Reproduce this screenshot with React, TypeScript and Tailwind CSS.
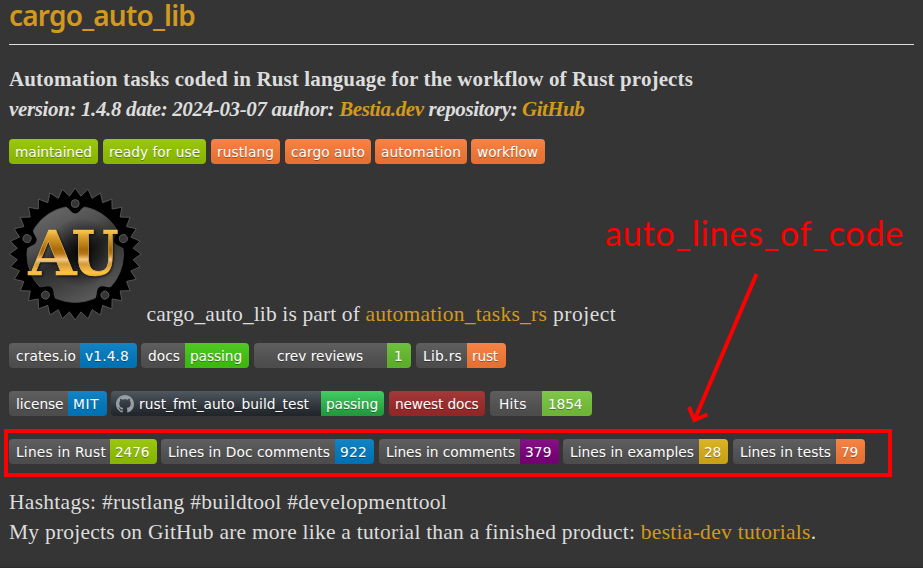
import type { ReactNode } from "react";

type Cell = { text: string; box: string; pad: string; track: string };

function Badge({ cells, icon, cls = "" }: { cells: Cell[]; icon?: ReactNode; cls?: string }) {
  return (
    <span className={`flex h-[25px] shrink-0 overflow-hidden rounded-[4px] ${cls}`}>
      {cells.map((c, i) => (
        <span key={c.text} className={`flex h-full shrink-0 ${c.box}`}>
          <span className={`flex h-full w-full items-center bg-linear-to-b from-[#bbbbbb]/10 to-black/10 ${c.pad}`}>
            {i === 0 && icon}
            <span className={`leading-[26px] ${c.track}`}>{c.text}</span>
          </span>
        </span>
      ))}
    </span>
  );
}

const cell = (text: string, box: string, pad: string, track = ""): Cell => ({ text, box, pad, track });

function Row({ children, cls }: { children: ReactNode; cls: string }) {
  return (
    <div
      className={`flex h-[25px] whitespace-nowrap font-['DejaVu_Sans',sans-serif] text-[13.75px] text-white [text-shadow:0_1px_0_rgba(1,1,1,0.35)] ${cls}`}
    >
      {children}
    </div>
  );
}

// Outline of the 32-tooth ring
const gear = Array.from({ length: 64 }, (_, i) => {
  const a = (i * Math.PI) / 32 - Math.PI / 2;
  const r = i % 2 === 0 ? 66 : 58.2;
  return `${(66.2 + r * Math.cos(a)).toFixed(2)},${(66 + r * Math.sin(a)).toFixed(2)}`;
}).join(" ");

const bolts = [0, 72, 144, 216, 288];

function Logo() {
  return (
    <svg width="132" height="132" viewBox="0 0 132 132" className="block shrink-0 self-start overflow-visible">
      <defs>
        <linearGradient id="disk" x1="0.25" y1="0" x2="0.75" y2="1">
          <stop offset="0" stopColor="#686868" />
          <stop offset="0.3" stopColor="#505050" />
          <stop offset="0.5" stopColor="#2c2c2c" />
          <stop offset="0.7" stopColor="#404040" />
          <stop offset="1" stopColor="#606060" />
        </linearGradient>
        <radialGradient id="core" cx="0.56" cy="0.48" r="0.36">
          <stop offset="0" stopColor="#000" stopOpacity="0.9" />
          <stop offset="1" stopColor="#000" stopOpacity="0" />
        </radialGradient>
        <linearGradient id="gold" gradientUnits="userSpaceOnUse" x1="0" y1="42" x2="0" y2="88">
          <stop offset="0" stopColor="#ffc94a" />
          <stop offset="0.15" stopColor="#d9a030" />
          <stop offset="0.42" stopColor="#a96a08" />
          <stop offset="0.52" stopColor="#b87818" />
          <stop offset="0.64" stopColor="#f3c880" />
          <stop offset="0.74" stopColor="#d39a3c" />
          <stop offset="0.92" stopColor="#ffc240" />
          <stop offset="1" stopColor="#f2b233" />
        </linearGradient>
      </defs>
      <polygon points={gear} fill="#000" stroke="#5a5a5a" strokeWidth="0.9" strokeLinejoin="round" />
      <circle cx="66.2" cy="66.2" r="48.3" fill="url(#disk)" stroke="#4a4a4a" strokeWidth="0.8" />
      <circle cx="66.2" cy="66.2" r="48" fill="url(#core)" />
      {bolts.map((deg) => (
        <g key={deg} transform={`rotate(${deg} 66.2 66.2)`}>
          <path
            d="M55.5 17.5 L58.5 19.8 Q60 20.8 61.5 22.8 Q63.5 25.4 66.2 25.4 Q68.9 25.4 70.9 22.8 Q72.4 20.8 73.9 19.8 L76.9 17.5 L75 13 L57 13 Z"
            fill="#000"
          />
          <circle cx="66.2" cy="15.6" r="4" fill="#363636" stroke="#5a5a5a" strokeWidth="0.9" />
        </g>
      ))}
      <g className="font-['DejaVu_Serif',serif] font-bold [filter:drop-shadow(1px_1.2px_0.8px_rgba(0,0,0,0.7))]" fontSize="62.5" strokeWidth="0.6">
        <g fill="url(#gold)" stroke="#f3bd4d">
          <text x="19.6" y="87.3" textLength="48" lengthAdjust="spacingAndGlyphs">A</text>
          <text x="62.6" y="87.3" textLength="47" lengthAdjust="spacingAndGlyphs">U</text>
        </g>
      </g>
    </svg>
  );
}

const octocat = (
  <svg viewBox="0 0 16 16" className="mr-[5px] h-[18px] w-[18px] shrink-0" fill="#959da5">
    <path d="M8 0C3.58 0 0 3.58 0 8c0 3.54 2.29 6.53 5.47 7.59.4.07.55-.17.55-.38 0-.19-.01-.82-.01-1.49-2.01.37-2.53-.49-2.69-.94-.09-.23-.48-.94-.82-1.13-.28-.15-.68-.52-.01-.53.63-.01 1.08.58 1.23.82.72 1.21 1.87.87 2.33.66.07-.52.28-.87.51-1.07-1.78-.2-3.64-.89-3.64-3.95 0-.87.31-1.59.82-2.15-.08-.2-.36-1.02.08-2.12 0 0 .67-.21 2.2.82.64-.18 1.32-.27 2-.27s1.36.09 2 .27c1.53-1.04 2.2-.82 2.2-.82.44 1.1.16 1.92.08 2.12.51.56.82 1.27.82 2.15 0 3.07-1.87 3.75-3.65 3.95.29.25.54.73.54 1.48 0 1.07-.01 1.93-.01 2.2 0 .21.15.46.55.38A8.01 8.01 0 0 0 16 8c0-4.42-3.58-8-8-8z" />
  </svg>
);

function Link({ children, cls = "" }: { children: ReactNode; cls?: string }) {
  return <a className={`text-[#d2991d] ${cls}`}>{children}</a>;
}

export default function App() {
  return (
    <div className="relative h-[568px] w-[923px] overflow-hidden border-b border-[#2c2c2c] bg-[#353535] pl-[9px] font-['Liberation_Serif',serif] text-[21px] leading-[30px] whitespace-pre text-[#dddddd]">
      <h1 className="h-[28px] font-['Noto_Sans',sans-serif] text-[28px] leading-[30px] font-semibold tracking-[-0.79px] text-[#d2991d]">
        cargo_auto_lib
      </h1>
      <hr className="mt-4 w-[905px] border-t border-[#dddddd]" />
      <p className="mt-[19px] font-bold tracking-[0.135px]">
        Automation tasks coded in Rust language for the workflow of Rust projects
      </p>
      <p className="font-bold italic">
        <span className="tracking-[-0.365px]">{"version: 1.4.8 date: 2024-03-07 author: "}</span>
        <Link cls="tracking-[-0.346px]">Bestia.dev</Link>
        <span className="tracking-[-0.423px]">{" repository: "}</span>
        <Link cls="tracking-[-0.55px]">GitHub</Link>
      </p>

      <Row cls="mt-[15px]">
        <Badge cells={[cell("maintained", "w-[89px] bg-[#97ca00]", "pl-1.5", "tracking-[-0.089px]")]} />
        <Badge cls="ml-[5px]" cells={[cell("ready for use", "w-[103px] bg-[#97ca00]", "pl-1.5")]} />
        <Badge cls="ml-[5px]" cells={[cell("rustlang", "w-[69px] bg-[#fe7d37]", "pl-1.5", "tracking-[0.049px]")]} />
        <Badge cls="ml-[5px]" cells={[cell("cargo auto", "w-[86px] bg-[#fe7d37]", "pl-1.5", "tracking-[0.015px]")]} />
        <Badge cls="ml-1" cells={[cell("automation", "w-[92px] bg-[#fe7d37]", "pl-1.5", "tracking-[0.09px]")]} />
        <Badge cls="ml-1" cells={[cell("workflow", "w-[74px] bg-[#fe7d37]", "pl-1.5", "tracking-[-0.074px]")]} />
      </Row>

      <div className="mt-6 flex h-[141px] items-end">
        <Logo />
        <p className="ml-[5.5px] text-[21.5px]">
          <span className="tracking-[0.126px]">{"cargo_auto_lib is part of "}</span>
          <Link cls="tracking-[0.255px]">automation_tasks_rs</Link>
          <span className="tracking-[0.5px]">{" project"}</span>
        </p>
      </div>

      <Row cls="mt-[14px]">
        <Badge cells={[cell("crates.io", "w-[71px] bg-[#555]", "pl-[7px]", "tracking-[0.083px]"), cell("v1.4.8", "w-[57px] bg-[#007ec6]", "pl-[5px]", "tracking-[0.146px]")]} />
        <Badge cls="ml-1" cells={[cell("docs", "w-[44px] bg-[#555]", "pl-[7px]"), cell("passing", "w-[64px] bg-[#4c1]", "pl-[5px]", "tracking-[-0.106px]")]} />
        <Badge cls="ml-[5px]" cells={[cell("crev reviews", "w-[133px] bg-[#555]", "pl-[23px]", "tracking-[-0.043px]"), cell("1", "w-[24px] bg-[#66c12f]", "pl-[7px]")]} />
        <Badge cls="ml-[5px]" cells={[cell("Lib.rs", "w-[51px] bg-[#555]", "pl-[7px]", "tracking-[0.267px]"), cell("rust", "w-[39px] bg-[#fe7d37]", "pl-[5px]", "tracking-[-0.231px]")]} />
      </Row>

      <Row cls="mt-[23px]">
        <Badge cells={[cell("license", "w-[59px] bg-[#555]", "pl-[7px]", "tracking-[-0.071px]"), cell("MIT", "w-[39px] bg-[#007ec6]", "pl-[5px]", "tracking-[0.7px]")]} />
        <Badge
          cls="ml-1"
          icon={octocat}
          cells={[
            cell("rust_fmt_auto_build_test", "w-[210px] bg-linear-to-b from-[#444d56] to-[#24292e]", "pl-[5px]", "tracking-[0.033px]"),
            cell("passing", "w-[63px] bg-linear-to-b from-[#34d058] to-[#28a745]", "pl-[5px]", "tracking-[-0.106px]"),
          ]}
        />
        <Badge cls="ml-[5px]" cells={[cell("newest docs", "w-[96px] bg-[#a22b2b]", "pl-1.5", "tracking-[-0.197px]")]} />
        <Badge cls="ml-[5px]" cells={[cell("Hits", "w-[52px] bg-[#555]", "pl-[9px]", "tracking-[0.196px]"), cell("1854", "w-[50px] bg-[#79c83d]", "pl-[6px]", "tracking-[-0.15px]")]} />
      </Row>

      <Row cls="mt-[23px]">
        <Badge cells={[cell("Lines in Rust", "w-[101px] bg-[#555]", "pl-[7px]", "tracking-[0.208px]"), cell("2476", "w-[47px] bg-[#97ca00]", "pl-[5px]", "tracking-[-0.15px]")]} />
        <Badge cls="ml-1" cells={[cell("Lines in Doc comments", "w-[174px] bg-[#555]", "pl-[7px]", "tracking-[0.071px]"), cell("922", "w-[39px] bg-[#007ec6]", "pl-[5px]", "tracking-[0.2px]")]} />
        <Badge cls="ml-[5px]" cells={[cell("Lines in comments", "w-[141px] bg-[#555]", "pl-[7px]", "tracking-[-0.034px]"), cell("379", "w-[39px] bg-[#800080]", "pl-[5px]", "tracking-[0.1px]")]} />
        <Badge cls="ml-1" cells={[cell("Lines in examples", "w-[136px] bg-[#555]", "pl-[7px]", "tracking-[0.033px]"), cell("28", "w-[29px] bg-[#dfb317]", "pl-[5px]", "tracking-[-0.3px]")]} />
        <Badge cls="ml-[5px]" cells={[cell("Lines in tests", "w-[103px] bg-[#555]", "pl-[7px]", "tracking-[0.024px]"), cell("79", "w-[29px] bg-[#fe7d37]", "pl-[5px]", "tracking-[-0.3px]")]} />
      </Row>

      <p className="mt-[23px] text-[21.5px] tracking-[0.286px]">Hashtags: #rustlang #buildtool #developmenttool</p>
      <p className="text-[21.5px]">
        <span className="tracking-[0.225px]">{"My projects on GitHub are more like a tutorial than a finished product: "}</span>
        <Link cls="tracking-[0.29px]">bestia-dev tutorials</Link>.
      </p>

      {/* Red annotations drawn over the page */}
      <div className="absolute top-[429px] left-[4px] h-[48px] w-[888px] border-4 border-[#ff0000]" />
      <div className="absolute top-[213px] left-[605px] font-['Lato',sans-serif] text-[34px] leading-[40px] tracking-[0.78px] text-[#ff0000]">
        auto_lines_of_code
      </div>
      <svg className="absolute top-[270px] left-[680px]" width="84" height="156" viewBox="680 270 84 156" fill="none" stroke="#ff0000" strokeWidth="4">
        <path d="M756.5 274 L694.5 420" />
        <path d="M689 407 L694.3 420 L707.5 414.5" />
      </svg>
    </div>
  );
}
